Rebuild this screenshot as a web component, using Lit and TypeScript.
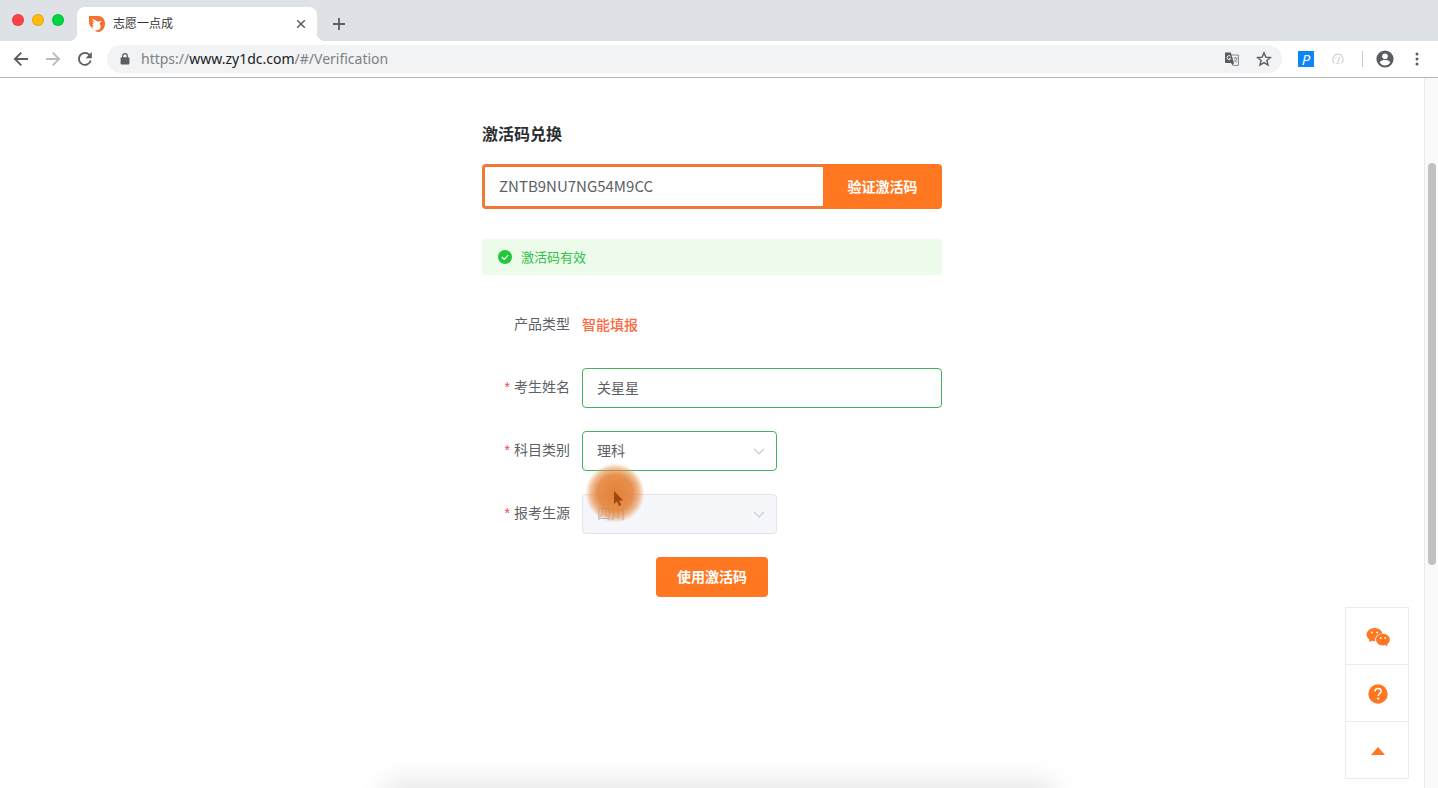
import { LitElement, html, css, svg } from "lit";
import { customElement, state } from "lit/decorators.js";

const icons = {
  flame: svg`<svg viewBox="0 0 16 16" width="16" height="16"><path fill="#f5722e" d="M0 0h9c4.200 0 7 3 7 7.600 0 4.200-2.300 7.400-5.800 8.400-1.600 0-3.200-.5-4.400-1.500 2.600.2 4.500-.5 5.400-2.200.6-1.400.4-2.500-.1-3.500-.6-1.200-.4-2.300 1.700-3.600-1.600-.5-2.600-.3-3.500.5L2.300 2.300l3.500 4.200-3-.9 2.200 2.700-2-.2 1.800 2.200-2 .2 2 2.600C1.800 11.600 0 8.800 0 5.400z"/></svg>`,
  close: svg`<svg viewBox="0 0 10 10" width="10" height="10"><path d="M1.200 1.200l7.600 7.600M8.800 1.200L1.200 8.800" stroke="#5a5d61" stroke-width="1.500"/></svg>`,
  plus: svg`<svg viewBox="0 0 12 12" width="12" height="12"><path d="M6 0v12M0 6h12" stroke="#5a5d61" stroke-width="1.800"/></svg>`,
  back: svg`<svg viewBox="0 0 16 16" width="16" height="16"><path d="M15 8H2M8.300 1.600L1.900 8l6.400 6.400" fill="none" stroke="#5a5d61" stroke-width="1.900"/></svg>`,
  forward: svg`<svg viewBox="0 0 16 16" width="16" height="16"><path d="M1 8h13M7.700 1.600L14.100 8l-6.400 6.400" fill="none" stroke="#b9bbbe" stroke-width="1.900"/></svg>`,
  reload: svg`<svg viewBox="0 0 16 16" width="16" height="16"><path d="M13.700 9.500A6 6 0 1 1 12.500 4" fill="none" stroke="#5a5d61" stroke-width="1.900"/><path d="M14.800 1v6.200H8.600z" fill="#5a5d61"/></svg>`,
  lock: svg`<svg viewBox="0 0 10 12" width="10" height="12"><rect x=".6" y="4.300" width="8.800" height="7.300" rx="1" fill="#5a5d61"/><path d="M2.700 5V3a2.300 2.300 0 0 1 4.600 0v2" fill="none" stroke="#5a5d61" stroke-width="1.200"/></svg>`,
  translate: svg`<svg viewBox="0 0 14 14" width="14" height="14"><path d="M6.500 3h6.900v10.400H8" fill="#f4f5f6" stroke="#85888c" stroke-width="1"/><path d="M0 .6h5.800L9 11H.8a.8.8 0 0 1-.8-.8z" fill="#5a5d61"/><path d="M6 11h3l-1.400 2.600z" fill="#5a5d61"/><path d="M5.600 4.400a2 2 0 1 0 .2 2.200H4.200" fill="none" stroke="#fff" stroke-width="1"/><path d="M8.300 6h4.200M10.500 5v1M12 6c-.3 1.700-1.300 3-2.300 4M9.400 7.300c.6 1.300 1.500 2.300 2.800 3.200" fill="none" stroke="#85888c" stroke-width=".9"/></svg>`,
  star: svg`<svg viewBox="0 0 16 16" width="16" height="16"><path d="M8 1.800l1.800 4.300 4.600.4-3.500 3 1.100 4.600-4-2.500-4 2.500 1.100-4.600-3.500-3 4.600-.4z" fill="none" stroke="#5a5d61" stroke-width="1.400"/></svg>`,
  gauge: svg`<svg viewBox="0 0 12 12" width="12" height="12"><path d="M2.600 10.300a5.200 5.200 0 1 1 6.800 0M4.200 10.300h3.600" fill="none" stroke="#cfcfcf" stroke-width="1.100"/><path d="M3.400 5.400l.8-1M5.600 9L7.900 3.900" stroke="#c4c4c4" stroke-width="1"/></svg>`,
  person: svg`<svg viewBox="0 0 18 18" width="18" height="18"><circle cx="9" cy="9" r="8.600" fill="#5a5d61"/><circle cx="9" cy="6.200" r="2.800" fill="#fff"/><path d="M3.600 12.500c.9-1.900 3.500-2.500 5.400-2.500s4.500.6 5.400 2.500A6.500 6.500 0 0 1 9 15.400a6.500 6.500 0 0 1-5.400-2.900z" fill="#fff"/></svg>`,
  dots: svg`<svg viewBox="0 0 4 14" width="4" height="14"><circle cx="2" cy="2" r="1.500" fill="#5a5d61"/><circle cx="2" cy="7" r="1.500" fill="#5a5d61"/><circle cx="2" cy="12" r="1.500" fill="#5a5d61"/></svg>`,
  check: svg`<svg viewBox="0 0 14 14" width="14" height="14"><circle cx="7" cy="7" r="7" fill="#22c83c"/><path d="M3.800 7l2.400 2.400 4-4.200" fill="none" stroke="#fff" stroke-width="1.200"/></svg>`,
  chevron: svg`<svg viewBox="0 0 12 7" width="12" height="7"><path d="M1 .8l5 5 5-5" fill="none" stroke="#c5c9d1" stroke-width="1.200"/></svg>`,
  wechat: svg`<svg viewBox="0 0 24 20" width="24" height="20"><path fill="#ff7720" d="M8.600 1C4.100 1 .6 3.900.6 7.600c0 2.100 1.100 3.900 2.900 5.100l-.2 2.500 2.600-1.500c1 .3 1.600.5 2.700.5h.7C8.500 10 11.500 6.300 16.400 6.400 15.700 3.200 12.300 1 8.600 1z"/><path fill="#ff7720" d="M23.800 12.600c0-3.300-3-5.900-6.900-5.900s-6.900 2.600-6.900 5.900 3 5.900 6.900 5.900c.8 0 1.600-.1 2.300-.4l2.300 1.300-.3-2.100c1.600-1 2.600-2.700 2.600-4.700z"/><g fill="#fff"><circle cx="5.900" cy="5.500" r="1"/><circle cx="11.200" cy="5.500" r="1"/><circle cx="14.700" cy="11" r=".9"/><circle cx="19.100" cy="11" r=".9"/></g></svg>`,
  help: svg`<svg viewBox="0 0 20 20" width="20" height="20"><circle cx="10" cy="10" r="9.700" fill="#ff7720"/><path d="M7 7.600c0-1.900 1.300-3 3-3s3.100 1 3.100 2.700c0 2.200-2.900 2.300-2.900 4.800" fill="none" stroke="#fff" stroke-width="1.500"/><circle cx="10.200" cy="14.500" r="1.100" fill="#fff"/></svg>`,
  up: svg`<svg viewBox="0 0 14 8" width="14" height="8"><path d="M7 0l7 8H0z" fill="#ff7720"/></svg>`,
  pointer: svg`<svg viewBox="0 0 12 18" width="12" height="18"><path d="M1 1v13l3-2.700 2 4.800 2.200-.9-2-4.700h4z" fill="#9c480f"/></svg>`,
};

@customElement("browser-chrome")
class BrowserChrome extends LitElement {
  static styles = css`
    :host { display: block; font-family: Roboto, "Noto Sans CJK SC", sans-serif; }
    button { border: 0; padding: 0; background: none; display: grid; place-items: center; }
    svg { display: block; }
    .tabs { display: flex; height: 41px; background: #dee1e6; padding-left: 12px; }
    .lights { display: flex; gap: 8px; padding-top: 14px; width: 65px; box-sizing: border-box; }
    .light { width: 12px; height: 12px; border-radius: 50%; box-shadow: inset 0 0 0 1px #0000001a; }
    .red { background: #fc4245; }
    .amber { background: #fdbc09; }
    .green { background: #02d443; }
    .tab { position: relative; display: flex; align-items: center; gap: 8px; width: 240px; margin-top: 7px; padding: 0 11px 0 12px; box-sizing: border-box; background: #fff; border-radius: 8px 8px 0 0; font-size: 12px; line-height: 16px; color: #35363a; }
    .tab::before, .tab::after { content: ""; position: absolute; bottom: 0; width: 8px; height: 8px; }
    .tab::before { right: 100%; background: radial-gradient(circle at 0 0, transparent 8px, #fff 8px); }
    .tab::after { left: 100%; background: radial-gradient(circle at 100% 0, transparent 8px, #fff 8px); }
    .name { flex: 1; }
    .add { margin: 7px 0 0 16px; }
    .bar { display: flex; align-items: center; height: 36px; background: #fff; border-bottom: 1px solid #b4b5b7; padding: 0 19px 0 13px; }
    .nav { display: flex; gap: 16px; margin-right: 14px; }
    .address { flex: 1; display: flex; align-items: center; height: 28px; border-radius: 14px; background: #f1f3f4; padding: 0 10px 0 13px; gap: 11px; }
    .url { flex: 1; font-family: "Noto Sans", sans-serif; font-size: 14px; line-height: 20px; color: #7b8187; white-space: nowrap; }
    .domain { color: #202124; }
    .marks { display: flex; align-items: center; gap: 17px; }
    .tools { display: flex; align-items: center; }
    .p { width: 16px; height: 16px; margin: 0 18px 0 16px; background: #0d86f5; color: #fff; font: italic 15px/16px "Open Sans", sans-serif; }
    .rule { width: 1px; height: 16px; background: #c8cacd; margin: 0 13px 0 18px; }
    .more { margin-left: 21px; }
  `;
  render() {
    return html`
      <div class="tabs">
        <div class="lights"><span class="light red"></span><span class="light amber"></span><span class="light green"></span></div>
        <div class="tab">${icons.flame}<span class="name">志愿一点成</span><button aria-label="关闭">${icons.close}</button></div>
        <button class="add" aria-label="新标签页">${icons.plus}</button>
      </div>
      <div class="bar">
        <div class="nav">
          <button aria-label="后退">${icons.back}</button>
          <button aria-label="前进">${icons.forward}</button>
          <button aria-label="刷新">${icons.reload}</button>
        </div>
        <div class="address">
          ${icons.lock}
          <span class="url">https://<span class="domain">www.zy1dc.com</span>/#/Verification</span>
          <span class="marks"><button aria-label="翻译">${icons.translate}</button><button aria-label="收藏">${icons.star}</button></span>
        </div>
        <div class="tools">
          <button class="p">P</button>
          <button aria-label="测速">${icons.gauge}</button>
          <span class="rule"></span>
          <button aria-label="用户">${icons.person}</button>
          <button class="more" aria-label="菜单">${icons.dots}</button>
        </div>
      </div>`;
  }
}

@customElement("activation-form")
class ActivationForm extends LitElement {
  static styles = css`
    :host { display: block; width: 460px; max-width: 100%; color: #5c5f64; font: 14px/20px "Noto Sans CJK SC", sans-serif; }
    h1 { margin: 0 0 19px; font-size: 16px; line-height: 24px; color: #2b2d30; }
    input, select, button { font: inherit; color: inherit; box-sizing: border-box; margin: 0; }
    button { border: 0; padding: 0 0 2px; background: #ff7720; color: #fff; font-weight: 700; border-radius: 4px; }
    .code { display: flex; height: 45px; margin-bottom: 30px; }
    .code input { flex: 1; min-width: 0; border: 3px solid #f07a35; border-right: 0; border-radius: 4px 0 0 4px; padding: 0 14px 2px; background: #fff; font-size: 15px; }
    .code button { width: 119px; border-radius: 0 4px 4px 0; }
    .notice { display: flex; align-items: center; gap: 9px; height: 36px; padding: 0 16px; margin-bottom: 30px; background: #ecfbea; color: #31c04a; border-radius: 4px; font-size: 13px; }
    .fields { display: grid; gap: 23px; }
    .row { display: grid; grid-template-columns: 88px 1fr; column-gap: 12px; min-height: 40px; }
    .label { line-height: 36px; text-align: right; }
    .must::before { content: "*"; color: #f0484c; font-family: "Liberation Sans", sans-serif; margin-right: 4px; }
    .product { line-height: 38px; font-weight: 500; color: #fb6840; }
    .field { width: 100%; height: 40px; padding: 0 14px 2px; border: 1px solid #42b45c; border-radius: 4px; background: #fff; font-size: 14px; }
    .pick { display: grid; width: 195px; align-items: center; }
    .pick > * { grid-area: 1 / 1; }
    .pick svg { justify-self: end; margin-right: 12px; pointer-events: none; }
    select { appearance: none; }
    select.field:disabled { background: #f5f7fb; border-color: #e1e4ea; color: #bcbfc6; opacity: 1; }
    .submit { justify-self: center; width: 112px; height: 40px; }
  `;
  @state() code = "ZNTB9NU7NG54M9CC";
  @state() name = "关星星";
  render() {
    return html`
      <h1>激活码兑换</h1>
      <div class="code">
        <input aria-label="激活码" .value=${this.code} />
        <button>验证激活码</button>
      </div>
      <div class="notice" role="status">${icons.check}<span>激活码有效</span></div>
      <div class="fields">
        <div class="row"><span class="label">产品类型</span><span class="product">智能填报</span></div>
        <div class="row"><label class="label must" for="name">考生姓名</label><input class="field" id="name" .value=${this.name} /></div>
        <div class="row"><label class="label must" for="subject">科目类别</label>
          <div class="pick"><select class="field" id="subject"><option>理科</option></select>${icons.chevron}</div></div>
        <div class="row"><label class="label must" for="origin">报考生源</label>
          <div class="pick"><select class="field" id="origin" disabled><option>四川</option></select>${icons.chevron}</div></div>
        <button class="submit">使用激活码</button>
      </div>`;
  }
}

@customElement("app-root")
class AppRoot extends LitElement {
  static styles = css`
    :host { display: flex; flex-direction: column; height: 100vh; background: #fff; }
    .view { position: relative; flex: 1; min-height: 0; display: flex; overflow: hidden; }
    .page { flex: 1; display: flex; flex-direction: column; align-items: center; padding-top: 43px; }
    .track { width: 14px; box-sizing: border-box; border-left: 1px solid #e9e9e9; background: #fafafa; padding: 85px 2px 0 3px; }
    .thumb { height: 402px; border-radius: 4px; background: #c1c1c1; }
    .side { position: absolute; right: 29px; bottom: 9px; width: 64px; box-sizing: border-box; border: 1px solid #ebebeb; background: #fff; }
    .side button { display: grid; place-items: center; box-sizing: border-box; width: 100%; height: 57px; padding: 2px 0 0 2px; border: 0; background: none; }
    .side button:first-child { height: 56px; }
    .side button + button { border-top: 1px solid #ebebeb; }
    .side svg { display: block; }
    .shade { position: absolute; left: 390px; right: 390px; top: 100%; height: 20px; box-shadow: 0 0 28px 4px #00000020; }
    .cursor { position: absolute; left: 585px; top: 385px; width: 60px; height: 60px; border-radius: 50%; background: radial-gradient(circle, #e17420e6 0, #e37f33dd 42%, #e68a4490 57%, #e68a4400 70%); display: grid; place-items: center; }
    .cursor svg { display: block; margin: 12px 0 0 8px; }
  `;
  render() {
    return html`
      <browser-chrome></browser-chrome>
      <div class="view">
        <main class="page"><activation-form></activation-form></main>
        <div class="track"><div class="thumb"></div></div>
        <nav class="side">
          <button aria-label="微信">${icons.wechat}</button>
          <button aria-label="帮助">${icons.help}</button>
          <button aria-label="返回顶部">${icons.up}</button>
        </nav>
        <div class="shade"></div>
        <div class="cursor">${icons.pointer}</div>
      </div>`;
  }
}
